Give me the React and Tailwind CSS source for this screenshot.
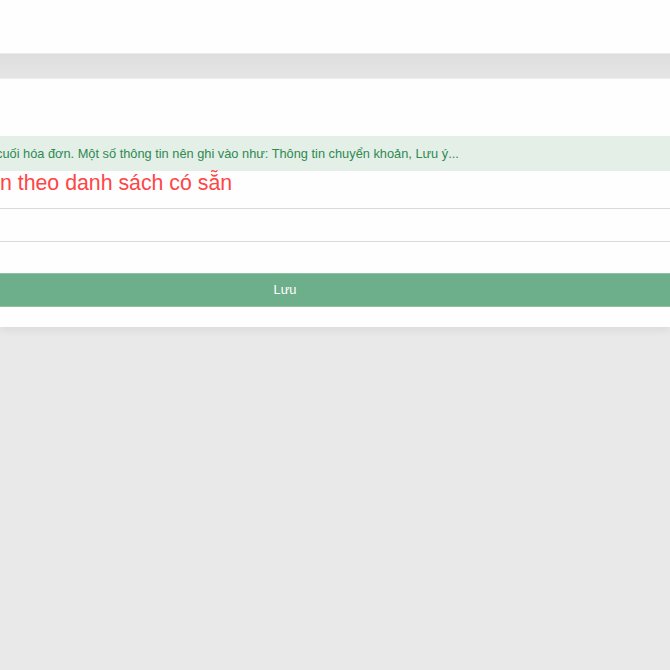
import React from "react";

export default function App() {
  return (
    <div
      className="min-h-[670px] w-[670px] overflow-hidden bg-[#e9e9e9]"
      style={{ fontFamily: '"Liberation Sans", Arial, sans-serif' }}
    >
      <div className="h-[54px] bg-[#fefefe] border-b border-[#ebebeb]" />
      <div className="h-[25px] bg-gradient-to-b from-[#dedede] to-[#e5e5e5] border-b border-[#efefef]" />

      <div className="bg-[#fefefe] pt-[57px] pb-[20px] shadow-[0_4px_8px_rgba(0,0,0,0.06)]">
        <div className="flex h-[35px] items-center bg-[#e4efe8] text-[12.8px] text-[#2e8a50] whitespace-nowrap">
          <span className="-ml-[4px]">
            cuối hóa đơn. Một số thông tin nên ghi vào như: Thông tin chuyển khoản, Lưu ý...
          </span>
        </div>
        <div className="h-[24px] text-[21.3px] leading-[24px] text-[#ff4545] whitespace-nowrap">
          n theo danh sách có sẵn
        </div>
        <div className="h-[14px] border-b border-[#d9d9e0]" />
        <div className="h-[33px] border-b border-[#d9d9e0]" />
        <div className="h-[31px]" />
        <button className="flex h-[34px] w-full items-center justify-center border-y border-[#8fc3a5] bg-[#6daf8a] pr-[100px] text-[12.8px] text-white">
          Lưu
        </button>
      </div>
    </div>
  );
}
